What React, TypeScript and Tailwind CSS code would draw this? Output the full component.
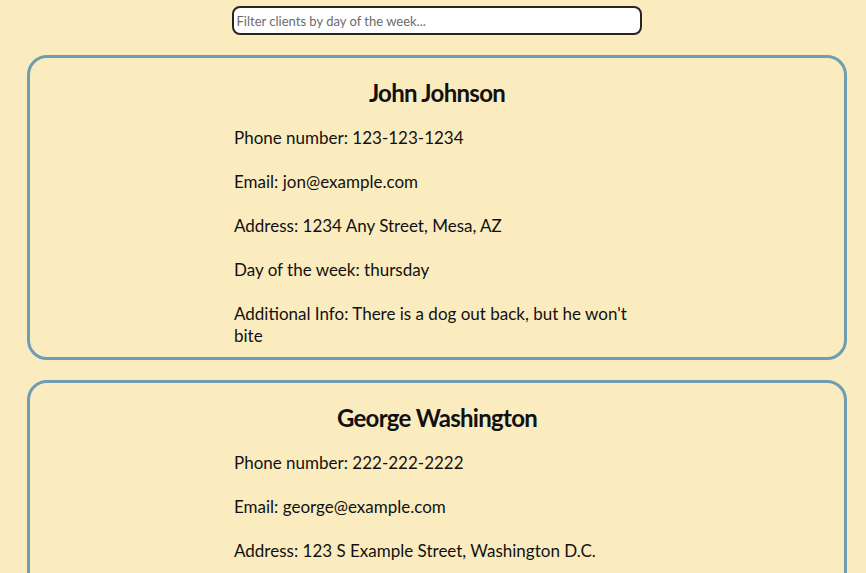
import React from "react";

const clients = [
  {
    name: "John Johnson",
    phone: "123-123-1234",
    email: "jon@example.com",
    address: "1234 Any Street, Mesa, AZ",
    day: "thursday",
    info: "There is a dog out back, but he won't bite",
  },
  {
    name: "George Washington",
    phone: "222-222-2222",
    email: "george@example.com",
    address: "123 S Example Street, Washington D.C.",
    day: "monday",
    info: "Knock loudly",
  },
];

export default function App() {
  return (
    <div
      className="bg-[#fbecc0] text-[#111] overflow-hidden h-[573px]"
      style={{ fontFamily: "Lato, 'Open Sans', sans-serif" }}
    >
      <div className="pt-[6px] flex justify-center">
        <input
          className="ml-[7px] w-[410px] h-[29px] bg-white border-2 border-[#2a2520] rounded-[8px] px-[3px] text-[13px] text-[#333] placeholder:text-[#6b6b6b] outline-none"
          placeholder="Filter clients by day of the week..."
        />
      </div>
      {clients.map((c) => (
        <div
          key={c.name}
          className="ml-[27px] w-[820px] mt-[20px] border-[3px] border-[#6f9db2] rounded-[20px] pt-[21px] pb-[10px]"
        >
          <h2 className="text-center font-bold text-[24px] leading-[28px] tracking-[-0.7px]">
            {c.name}
          </h2>
          <div className="w-[406px] mx-auto mt-[20px] text-[17px] leading-[22px]">
            <p className="mb-[22px]">Phone number: {c.phone}</p>
            <p className="mb-[22px]">Email: {c.email}</p>
            <p className="mb-[22px]">Address: {c.address}</p>
            <p className="mb-[22px]">Day of the week: {c.day}</p>
            <p>Additional Info: {c.info}</p>
          </div>
        </div>
      ))}
    </div>
  );
}
